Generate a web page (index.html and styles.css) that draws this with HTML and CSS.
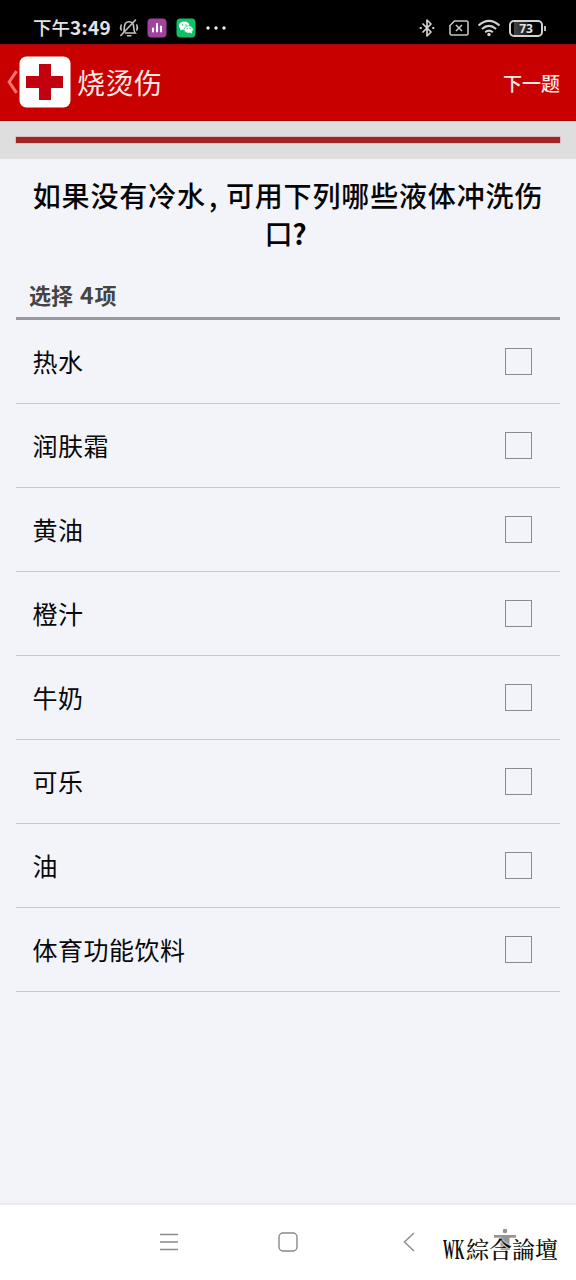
FILE: index.html
```html
<!DOCTYPE html>
<html lang="zh-CN">
<head>
<meta charset="utf-8">
<title>烧烫伤</title>
<link rel="stylesheet" href="styles.css">
</head>
<body>
<div class="screen">
  <div class="status">
    <span class="time">下午<span class="digits">3:49</span></span>
    <svg class="bell" width="20" height="20" viewBox="0 0 20 20" fill="none" stroke="#c4c4c4" stroke-width="1.600" stroke-linecap="round"><path d="M4.5 14.500C6 12.500 4.300 8 6.500 5.200C8 3.200 12.400 3 14 5.800C15.500 9 14 12.500 16.200 15H6.500M8.500 17.800H11.800M2.200 7Q1 9.500 2.200 12M17.800 7Q19 9.500 17.800 12M1.800 17.500L16.500 2"/></svg>
    <svg class="app-stats" width="20" height="20" viewBox="0 0 20 20"><rect x=".5" y=".5" width="19" height="19" rx="4" fill="#a1429d"/><path d="M6 10.500V13.500M10 6V13.500M14 8.500V13.500" stroke="#fff" stroke-width="2.100" stroke-linecap="round"/></svg>
    <svg class="app-chat" width="20" height="20" viewBox="0 0 20 20"><rect x=".5" y=".5" width="19" height="19" rx="4" fill="#0fc166"/><path d="M4.200 12.500L4.600 10.900A5.300 4.300 0 1 1 7.500 12L5.800 11.800Z" fill="#fff"/><ellipse cx="12.600" cy="11.500" rx="4.600" ry="3.700" fill="#fff" stroke="#0fc166" stroke-width=".7"/><path d="M14 14.500L16.200 15.700L15.800 13.500Z" fill="#fff"/><g fill="#0fc166"><circle cx="6.500" cy="7" r=".7"/><circle cx="10" cy="7" r=".7"/><circle cx="11.200" cy="10.600" r=".6"/><circle cx="14" cy="10.600" r=".6"/></g></svg>
    <svg class="more" width="22" height="6" viewBox="0 0 22 6" fill="#eee"><circle cx="3" cy="3" r="1.700"/><circle cx="11" cy="3" r="1.700"/><circle cx="19" cy="3" r="1.700"/></svg>
    <svg class="bluetooth" width="16" height="20" viewBox="0 0 16 20" fill="none" stroke="#d2d2d2" stroke-width="1.700" stroke-linejoin="round"><path d="M3.500 5.500L12 14L8 18V2L12 6L3.500 14.500"/><path d="M.7 10H2.700M13.300 10H15.300" stroke-width="2"/></svg>
    <svg class="sim" width="20" height="16" viewBox="0 0 20 16" fill="none" stroke="#c4c4c4" stroke-width="1.600"><path d="M5.500 1H17.500Q19 1 19 2.500V13.500Q19 15 17.500 15H2.500Q1 15 1 13.500V5.500Z"/><path d="M7 5L13 11M13 5L7 11"/></svg>
    <svg class="wifi" width="24" height="18" viewBox="0 0 24 18" fill="none" stroke="#d2d2d2" stroke-width="2"><path d="M1.500 6.500Q12-2.700 22.500 6.500M4.900 10Q12 3.700 19.100 10M8.200 13.300Q12 10 15.800 13.300"/><circle cx="12" cy="15.500" r="1.700" fill="#d2d2d2" stroke="none"/></svg>
    <div class="battery"><span>73</span></div>
  </div>
  <header class="header">
    <svg class="back" width="11" height="24" viewBox="0 0 11 24" fill="none" stroke="#ff7472" stroke-width="3"><path d="M9.500 1.200L2.200 12L9.500 22.800"/></svg>
    <svg class="logo" width="52" height="52" viewBox="0 0 52 52"><rect x=".5" y=".5" width="51" height="51" rx="7" fill="#fff"/><path d="M20 8H32V20H44V32H32V44H20V32H7V20H20Z" fill="#c3000e"/></svg>
    <h1 class="title">烧烫伤</h1>
    <span class="next">下一题</span>
  </header>
  <div class="progress"><div class="progress-bar"></div></div>
  <main class="content">
    <h2 class="question">如果没有冷水<span class="comma">,</span>可用下列哪些液体冲洗伤<br>口<span class="mark">?</span></h2>
    <div class="hint">选择 <span class="count">4</span>项</div>
    <ul class="options">
      <li class="option"><span>热水</span><i class="box"></i></li>
      <li class="option"><span>润肤霜</span><i class="box"></i></li>
      <li class="option"><span>黄油</span><i class="box"></i></li>
      <li class="option"><span>橙汁</span><i class="box"></i></li>
      <li class="option"><span>牛奶</span><i class="box"></i></li>
      <li class="option"><span>可乐</span><i class="box"></i></li>
      <li class="option"><span>油</span><i class="box"></i></li>
      <li class="option"><span>体育功能饮料</span><i class="box"></i></li>
    </ul>
  </main>
  <nav class="nav">
    <svg class="nav-menu" width="20" height="20" viewBox="0 0 20 20" stroke="#8a8a8a" stroke-width="1.400"><path d="M1 2.500H19M1 10H19M1 17.500H19"/></svg>
    <svg class="nav-home" width="20" height="20" viewBox="0 0 20 20" fill="none" stroke="#8a8a8a" stroke-width="1.400"><rect x="1" y="1" width="18" height="18" rx="4"/></svg>
    <svg class="nav-back" width="12" height="20" viewBox="0 0 12 20" fill="none" stroke="#8f8f8f" stroke-width="1.500"><path d="M11 1L1.500 10L11 19"/></svg>
    <svg class="nav-access" width="22" height="28" viewBox="0 0 22 28" fill="#959595"><circle cx="11" cy="3" r="2.300"/><path d="M0 7H22V9.800H15.500V22H6.500V9.800H0Z"/></svg>
  </nav>
  <div class="watermark"><span class="wk">WK</span><span lang="zh-TW">綜合論壇</span></div>
</div>
</body>
</html>
```
FILE: styles.css
```css
* { box-sizing: border-box; }
body { margin: 0; font-family: "Noto Sans CJK SC", sans-serif; }
svg { display: block; flex: none; }
.screen { position: relative; display: flex; flex-direction: column; width: 576px; height: 1280px; overflow: hidden; background: #f3f4f9; }

.status { display: flex; align-items: center; height: 44px; padding: 12px 30px 0 33px; background: #000; color: #e4e4e4; }
.time { width: 86px; padding-bottom: 2px; font-size: 18.500px; font-weight: 500; line-height: 30px; white-space: nowrap; }
.digits { font-size: 19px; letter-spacing: .3px; font-weight: 700; }
.app-stats { margin-left: 8px; }
.app-chat { margin-left: 9px; }
.more { margin-left: 9px; }
.bluetooth { margin-left: auto; }
.sim { margin-left: 14px; }
.wifi { margin-left: 8px; }
.battery { position: relative; display: flex; align-items: center; justify-content: center; width: 34px; height: 17px; margin: 0 3px 0 8px; border: 2px solid #d2d2d2; border-radius: 5px; background: linear-gradient(90deg, transparent 3px, #444 3px, #222 15px, #000 20px); font: 700 12px/13px "Noto Sans", sans-serif; }
.battery::after { content: ""; position: absolute; right: -5px; top: 4px; width: 2px; height: 5px; background: #bbb; }

.header { display: flex; align-items: center; height: 77px; padding: 0 16px 1px 7px; background: #c80000; border-top: 1px solid #a00a0e; border-bottom: 1px solid #a80006; color: #ffe9e6; }
.logo { margin-left: 1px; }
.title { margin: 0 0 0 6px; font-size: 28px; font-weight: 400; line-height: 40px; letter-spacing: .5px; }
.next { margin-left: auto; font-size: 19px; font-weight: 500; }

.progress { height: 38px; padding: 16px 16px 0; background: #dedede; }
.progress-bar { height: 6px; background: #9e2626; box-shadow: 0 0 0 .5px #d99; }

.content { flex: 1; padding: 17px 16px 0; }
.question { margin: 0; height: 76px; font-size: 28px; font-weight: 500; line-height: 38px; letter-spacing: .85px; text-align: center; white-space: nowrap; color: #050505; }
.comma { display: inline-block; width: 20px; text-indent: 3px; text-align: left; }
.mark { margin-right: 4px; margin-left: -1px; font-weight: 700; }
.hint { height: 68px; padding: 27px 13px 0; border-bottom: 3px solid #97979d; font-size: 22px; font-weight: 700; line-height: 30px; color: #444; word-spacing: 2px; }
.count { margin-right: 1px; font-size: 23px; }
.options { margin: 0; padding: 0; list-style: none; }
.option { display: flex; align-items: center; justify-content: space-between; height: 84px; padding: 0 28px 0 16.500px; border-bottom: 1px solid #c6c7cc; font-size: 25px; letter-spacing: .5px; color: #080808; }
.option span { padding-bottom: 2px; }
.box { width: 27px; height: 27px; border: 1.500px solid #8b8b8f; }

.nav { display: flex; align-items: center; height: 77px; padding: 0 60px 2px 159px; background: #fff; border-top: 2px solid #ebecf0; }
.nav-home { margin-left: 99px; }
.nav-back { margin-left: 105px; }
.nav-access { margin-left: 79px; }
.watermark { position: absolute; left: 443px; top: 1235px; display: flex; align-items: center; height: 28px; font: 500 23px/28px "Noto Serif CJK TC", "Noto Sans CJK TC", serif; color: #111; white-space: nowrap; text-shadow: 0 0 2px #fffff0, 0 0 2px #fffff0; }
.wk { width: 23px; font: 700 29px/28px "Liberation Serif", serif; transform: scaleX(.41); transform-origin: left; }
```
